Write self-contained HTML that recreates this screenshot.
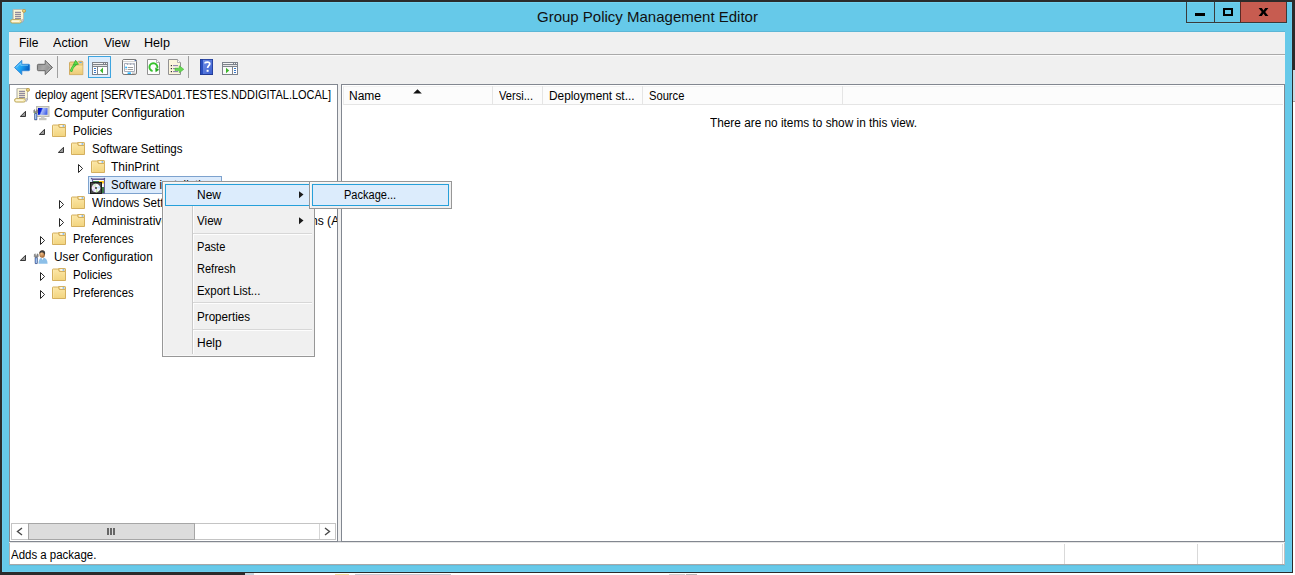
<!DOCTYPE html>
<html><head><meta charset="utf-8">
<style>
*{margin:0;padding:0;box-sizing:border-box}
html,body{width:1295px;height:575px;overflow:hidden;background:#2b2b2b;font-family:"Liberation Sans",sans-serif;font-size:12px;color:#000}
.a{position:absolute}
.t{position:absolute;white-space:pre;line-height:14px;font-size:12px;color:#000}
svg{position:absolute;overflow:visible}
</style></head><body>
<svg width="0" height="0" style="position:absolute">
<defs>
<linearGradient id="fold" x1="0" y1="0" x2="0" y2="1"><stop offset="0" stop-color="#fce7a8"/><stop offset="1" stop-color="#f2d47e"/></linearGradient>
<symbol id="folder" viewBox="0 0 14 13">
<path d="M0.5 1.6 Q0.5 1 1.1 1 L5.8 1 Q6.4 1 6.8 1.8 L7.4 3.4 L13.5 3.4 L13.5 12.5 L0.5 12.5 Z" fill="url(#fold)" stroke="#cfa852" stroke-width="0.9"/>
<path d="M6.5 0.5 L12.9 0.5 Q13.5 0.5 13.5 1.1 L13.5 3.4 L7.4 3.4 Z" fill="#f9e4aa" stroke="#cfa852" stroke-width="0.9"/>
<rect x="8.3" y="1.3" width="3.8" height="1.3" fill="#fff"/><rect x="10.6" y="1.3" width="1.6" height="1.3" fill="#5aa4f0"/>
<rect x="1.05" y="1.6" width="0.6" height="10.4" fill="#fff3c8" opacity="0.6"/>
</symbol>
<symbol id="tri-exp" viewBox="0 0 6 6"><path d="M5.5 0.3 L5.5 5.5 L0.3 5.5 Z" fill="#9a9a9a" stroke="#262626" stroke-width="0.9" stroke-linejoin="miter"/></symbol>
<symbol id="tri-col" viewBox="0 0 5 9"><path d="M0.5 0.5 L4.6 4.5 L0.5 8.5 Z" fill="#fff" stroke="#262626" stroke-width="1"/></symbol>
<symbol id="scroll" viewBox="0 0 16 15">
<path d="M3 0.5 L13.5 0.5 L13.5 12 L3 12 Z" fill="#fdf7d6" stroke="#a9a9a0" stroke-width="1"/>
<path d="M3 0.5 L13.5 0.5 L13.5 12" fill="none" stroke="#bdbdb4" stroke-width="1"/>
<circle cx="14" cy="1.8" r="1.6" fill="#e8cf7a" stroke="#b29646" stroke-width="0.8"/>
<rect x="5" y="2.8" width="6" height="1" fill="#77708f"/><rect x="5" y="4.8" width="6" height="1" fill="#77708f"/>
<rect x="5" y="6.8" width="6" height="1" fill="#77708f"/><rect x="5" y="8.8" width="6" height="1" fill="#77708f"/>
<rect x="0.5" y="10.5" width="11" height="3.6" rx="1.8" fill="#f7eab0" stroke="#b8a45a" stroke-width="0.9"/>
<rect x="2" y="11.6" width="7" height="1.2" fill="#fffbe6"/>
<path d="M11.5 10.5 L13.5 10.8 L12 14" fill="#d9d9e6" stroke="#9999a8" stroke-width="0.6"/>
</symbol>
</defs></svg>

<!-- background strips -->
<div class="a" style="left:1293px;top:70px;width:2px;height:31px;background:#c9dbe4"></div>
<div class="a" style="left:1293px;top:101px;width:2px;height:1px;background:#a0a0a0"></div>
<div class="a" style="left:1293px;top:102px;width:2px;height:473px;background:#fff"></div>
<div class="a" style="left:245px;top:573px;width:9px;height:2px;background:#c8d4dc"></div>
<div class="a" style="left:254px;top:573px;width:1041px;height:2px;background:#fff"></div>

<div class="a" style="left:335px;top:574px;width:14px;height:1px;background:#f3dc9a"></div>
<div class="a" style="left:355px;top:574px;width:96px;height:1px;background:#c8c8d0"></div>
<div class="a" style="left:669px;top:574px;width:16px;height:1px;background:#d0d0d0"></div>
<div class="a" style="left:686px;top:574px;width:11px;height:1px;background:#b8b8b8"></div>
<!-- window frame -->
<div class="a" style="left:2px;top:2px;width:1291px;height:571px;background:#66c9e9;border-right:1px solid #2b2b2b;border-bottom:1px solid #2b2b2b"></div>
<div class="a" style="left:2px;top:2px;width:1290px;height:1px;background:#72d2f0"></div>
<div class="a" style="left:2px;top:2px;width:1px;height:570px;background:#6ecdee"></div>
<div class="a" style="left:2px;top:571px;width:1290px;height:1px;background:#6ecdee"></div>
<div class="a" style="left:1291px;top:2px;width:1px;height:570px;background:#6ecdee"></div>
<div class="a" style="left:1186px;top:23px;width:102px;height:1px;background:#70d0ee"></div>
<div class="a" style="left:9px;top:565px;width:1276px;height:1px;background:#60bedd"></div>
<div class="a" style="left:9px;top:31px;width:1276px;height:1px;background:#5cb6d6"></div>

<!-- title -->
<svg style="left:10px;top:9px" width="16" height="15"><use href="#scroll"/></svg>
<div id="titletext" class="t" style="left:537px;top:8px;font-size:15px;line-height:17px;color:#111">Group Policy Management Editor</div>

<!-- caption buttons -->
<div class="a" style="left:1186px;top:2px;width:29px;height:21px;border:1px solid #3a3a3a;border-top:0"></div>
<div class="a" style="left:1214px;top:2px;width:27px;height:21px;border:1px solid #3a3a3a;border-top:0;border-left:0"></div>
<div class="a" style="left:1240px;top:2px;width:47px;height:21px;background:#c75c50;border:1px solid #3a3a3a;border-top:0;border-left:1px solid #5a2a25"></div>
<div class="a" style="left:1195px;top:13px;width:10px;height:3px;background:#000"></div>
<div class="a" style="left:1223px;top:8px;width:10px;height:8px;border:2px solid #000"></div>
<svg style="left:1258px;top:8px" width="11" height="8" viewBox="0 0 11 8"><path d="M0.6 0 L3.8 0 L5.5 2.4 L7.2 0 L10.4 0 L7.2 4 L10.4 8 L7.2 8 L5.5 5.6 L3.8 8 L0.6 8 L3.8 4 Z" fill="#000"/></svg>

<!-- client area -->
<div class="a" style="left:9px;top:32px;width:1276px;height:533px;background:#f0f0f0"></div>
<!-- menu bar -->
<div class="a" style="left:9px;top:54px;width:1276px;height:1px;background:#a9a9a9"></div>
<div class="a" style="left:9px;top:55px;width:1276px;height:1px;background:#fbfbfb"></div>
<div class="t" style="left:19px;top:36px">File</div>
<div class="t" style="left:53px;top:36px;transform:scaleX(1.05);transform-origin:0 0">Action</div>
<div class="t" style="left:104px;top:36px">View</div>
<div class="t" style="left:144px;top:36px;transform:scaleX(1.05);transform-origin:0 0">Help</div>

<!-- TOOLBAR -->
<!-- back arrow -->
<svg style="left:14px;top:60px" width="17" height="16" viewBox="0 0 17 16">
<defs><linearGradient id="gb" x1="0" y1="0" x2="1" y2="0.4"><stop offset="0" stop-color="#62c8fc"/><stop offset="0.55" stop-color="#1ba2f2"/><stop offset="1" stop-color="#0762c4"/></linearGradient></defs>
<path d="M0.5 7.5 L7.8 0.4 L7.8 4.3 L14.6 4.3 Q15.6 4.3 15.6 5.3 L15.6 9.7 Q15.6 10.7 14.6 10.7 L7.8 10.7 L7.8 14.6 Z" fill="url(#gb)" stroke="#2f86d6" stroke-width="0.9" stroke-linejoin="round"/>
<path d="M2.4 7.2 L6.8 3 L6.8 5.3 L14 5.3" fill="none" stroke="#a8e4ff" stroke-width="0.7" opacity="0.8"/>
</svg>
<!-- forward arrow -->
<svg style="left:37px;top:60px" width="17" height="16" viewBox="0 0 17 16">
<defs><linearGradient id="gg" x1="0" y1="0" x2="1" y2="0.4"><stop offset="0" stop-color="#8a8a8a"/><stop offset="0.5" stop-color="#a8a8a8"/><stop offset="1" stop-color="#8c8c8c"/></linearGradient></defs>
<path d="M15.5 7.5 L8.2 0.4 L8.2 4.3 L1.4 4.3 Q0.4 4.3 0.4 5.3 L0.4 9.7 Q0.4 10.7 1.4 10.7 L8.2 10.7 L8.2 14.6 Z" fill="url(#gg)" stroke="#5c5c5c" stroke-width="0.9" stroke-linejoin="round"/>
<path d="M9.2 2.6 L13.6 7.5 L9.2 12.4" fill="none" stroke="#d8d8d8" stroke-width="0.6" opacity="0.7"/>
</svg>
<div class="a" style="left:57px;top:56px;width:1px;height:22px;background:#a0a0a0"></div>
<!-- folder up -->
<svg style="left:69px;top:60px" width="15" height="16" viewBox="0 0 15 16">
<defs><linearGradient id="gfu" x1="0" y1="0" x2="0" y2="1"><stop offset="0" stop-color="#fbe3a0"/><stop offset="1" stop-color="#eccb78"/></linearGradient></defs>
<path d="M0.5 3 Q0.5 2 1.5 2 L8.5 2 L9.5 1.3 L13 1.3 Q13.8 1.3 13.8 2.2 L13.8 14.6 L0.5 14.6 Z" fill="#f2d486" stroke="#c9a457" stroke-width="0.9"/>
<rect x="10.3" y="2" width="2.4" height="1.1" fill="#5aa8f0"/>
<path d="M0.9 5.2 L13.4 5.2 L13.4 14.2 L0.9 14.2 Z" fill="url(#gfu)"/>
<path d="M0.5 5 L13.8 5" stroke="#d9b666" stroke-width="0.8"/>
<path d="M2.3 10.6 Q3.2 6.6 6.6 4.2" fill="none" stroke="#34a82e" stroke-width="2.6" stroke-linecap="round"/>
<path d="M2.3 10.6 Q3.2 6.6 6.6 4.2" fill="none" stroke="#62e04e" stroke-width="1.5" stroke-linecap="round"/>
<path d="M4.2 4.9 L6.6 0.3 L9.4 4.3 Z" fill="#5cdc48" stroke="#34a82e" stroke-width="0.7" stroke-linejoin="round"/>
</svg>
<!-- checked button -->
<div class="a" style="left:88px;top:56px;width:23px;height:22px;background:#dcecfc;border:1px solid #3ea5e0"></div>
<svg style="left:92px;top:62px" width="16" height="13" viewBox="0 0 16 13" shape-rendering="crispEdges">
<rect x="0" y="0" width="16" height="13" fill="#7e838b"/>
<rect x="1" y="1" width="10" height="1" fill="#f4f4f4"/><rect x="12" y="1" width="1" height="1" fill="#f4f4f4"/><rect x="14" y="1" width="1" height="1" fill="#f4f4f4"/>
<rect x="1" y="3" width="14" height="1" fill="#e6e6e6"/>
<rect x="1" y="5" width="4" height="7" fill="#fff"/><rect x="6" y="5" width="9" height="7" fill="#fff"/>
<rect x="2" y="6" width="2" height="1" fill="#3a78c8"/><rect x="2" y="8" width="2" height="1" fill="#3a78c8"/><rect x="2" y="10" width="2" height="1" fill="#3a78c8"/>
<path d="M8 8.5 L11 5.6 L11 11.4 Z" fill="#3cb62a" shape-rendering="auto"/>
</svg>
<!-- properties -->
<svg style="left:122px;top:59px" width="16" height="16" viewBox="0 0 16 16">
<rect x="0.5" y="0.5" width="14" height="15" rx="1.6" fill="#fbfbfb" stroke="#767676" stroke-width="1"/>
<rect x="1.2" y="1.1" width="11.5" height="1" fill="#fff"/>
<rect x="12.6" y="1" width="1.4" height="1.2" fill="#4a6aa8"/>
<rect x="1" y="2.2" width="13.5" height="0.7" fill="#c4c4c4"/>
<path d="M2.5 4.5 L5 4.5 L5 5.5 L12.5 5.5 L12.5 12.5 L2.5 12.5 Z" fill="#fff" stroke="#a9aebb" stroke-width="1"/>
<rect x="5" y="4" width="7.8" height="2" fill="#a9aebb"/>
<rect x="6" y="4.7" width="2" height="0.9" fill="#fff"/><rect x="9.2" y="4.7" width="2.2" height="0.9" fill="#fff"/>
<circle cx="4.1" cy="8.5" r="0.9" fill="#1eaeff"/>
<rect x="5.6" y="8" width="5.6" height="1" rx="0.5" fill="#9c9c9c"/>
<circle cx="4.1" cy="10.5" r="0.6" fill="#8a8a8a"/>
<rect x="5.6" y="10" width="5.6" height="1" rx="0.5" fill="#9c9c9c"/>
<rect x="5.6" y="13.4" width="3.3" height="1.6" fill="#22b4ff"/>
<rect x="10" y="13.4" width="3.5" height="1.6" fill="#c9c9c9"/>
</svg>
<!-- refresh doc -->
<svg style="left:147px;top:59px" width="14" height="16" viewBox="0 0 14 16">
<path d="M0.5 0.5 L9.5 0.5 L12.5 3.5 L12.5 15.5 L0.5 15.5 Z" fill="#fdfdfd" stroke="#929292" stroke-linejoin="miter"/>
<path d="M9.5 0.5 L9.5 3.5 L12.5 3.5" fill="#fff" stroke="#a0a0a0" stroke-width="0.8"/>
<path d="M5.6 12.1 A4 4 0 1 1 10.3 9.2" fill="none" stroke="#36c22c" stroke-width="1.9"/>
<path d="M8.2 8.6 L12.2 10.8 L8.6 13.2 Z" fill="#22a81e"/>
</svg>
<!-- export list -->
<svg style="left:168px;top:59px" width="17" height="16" viewBox="0 0 17 16">
<path d="M0.5 0.5 L9.5 0.5 L12.5 3.5 L12.5 15.5 L0.5 15.5 Z" fill="#fcf5dc" stroke="#929292" stroke-linejoin="miter"/>
<path d="M9.5 0.5 L9.5 3.5 L12.5 3.5" fill="#fff" stroke="#a0a0a0" stroke-width="0.8"/>
<rect x="2.8" y="6" width="1.2" height="1.2" fill="#333"/><rect x="5" y="6.2" width="5" height="0.9" fill="#7a6fa8"/>
<rect x="2.8" y="9" width="1.2" height="1.2" fill="#333"/><rect x="5" y="9.2" width="5" height="0.9" fill="#7a6fa8"/>
<rect x="2.8" y="12" width="1.2" height="1.2" fill="#333"/><rect x="5" y="12.2" width="5" height="0.9" fill="#7a6fa8"/>
<path d="M7 9.2 L11.3 9.2 L11.3 6.8 L15.8 10.3 L11.3 13.8 L11.3 11.6 L7 11.6 Z" fill="#66d852" stroke="#45b838" stroke-width="0.6"/>
</svg>
<div class="a" style="left:188px;top:56px;width:1px;height:22px;background:#a0a0a0"></div>
<!-- help -->
<svg style="left:200px;top:59px" width="13" height="16" viewBox="0 0 13 16">
<defs><linearGradient id="gh" x1="0" y1="0" x2="1" y2="1"><stop offset="0" stop-color="#6f8fe6"/><stop offset="1" stop-color="#3a5ed0"/></linearGradient></defs>
<rect x="0" y="0" width="13" height="16" fill="#213a94"/>
<rect x="3" y="0.8" width="9.2" height="14.2" fill="url(#gh)"/>
<rect x="0.8" y="0.8" width="2.2" height="14.4" fill="#2a4fc0"/>
<path d="M5 4.6 C5 2.6 9.8 2.4 9.8 4.8 C9.8 6.6 7.6 6.8 7.6 9" fill="none" stroke="#fff" stroke-width="1.7"/>
<rect x="6.6" y="10.8" width="2" height="2" fill="#fff"/>
</svg>
<!-- action pane -->
<svg style="left:222px;top:62px" width="16" height="13" viewBox="0 0 16 13" shape-rendering="crispEdges">
<rect x="0" y="0" width="16" height="13" fill="#7e838b"/>
<rect x="1" y="1" width="10" height="1" fill="#f4f4f4"/><rect x="12" y="1" width="1" height="1" fill="#f4f4f4"/><rect x="14" y="1" width="1" height="1" fill="#f4f4f4"/>
<rect x="1" y="3" width="14" height="1" fill="#e6e6e6"/>
<rect x="1" y="5" width="9" height="7" fill="#fafafa"/><rect x="11" y="5" width="4" height="7" fill="#fff"/>
<rect x="12" y="6" width="2" height="1" fill="#3a78c8"/><rect x="12" y="8" width="2" height="1" fill="#3a78c8"/><rect x="12" y="10" width="2" height="1" fill="#3a78c8"/>
<path d="M4 5.8 L7.2 8.5 L4 11.2 Z" fill="#3cb62a" shape-rendering="auto"/>
</svg>


<!-- tree panel -->
<div class="a" style="left:9px;top:84px;width:329px;height:458px;background:#fff;border:1px solid #828790"></div>
<div class="a" style="left:10px;top:85px;width:327px;height:456px;overflow:hidden" id="tv"><div class="a" style="left:-10px;top:-85px;width:1295px;height:575px">
<svg style="left:14px;top:88px" width="16" height="15"><use href="#scroll"/></svg>
<div class="t" style="left:35px;top:88px;transform:scaleX(0.9144);transform-origin:0 0;">deploy agent [SERVTESAD01.TESTES.NDDIGITAL.LOCAL]</div>
<svg style="left:20px;top:111px" width="6" height="6"><use href="#tri-exp"/></svg>
<svg style="left:33px;top:106px" width="17" height="15" viewBox="0 0 17 15">
<defs><linearGradient id="scr" x1="0" y1="0" x2="1" y2="0.3"><stop offset="0" stop-color="#0000b0"/><stop offset="0.38" stop-color="#0826e0"/><stop offset="0.52" stop-color="#a6b8f8"/><stop offset="0.75" stop-color="#8098f2"/><stop offset="1" stop-color="#4a68ea"/></linearGradient></defs>
<rect x="3.5" y="0.5" width="12.5" height="10" fill="#deded6" stroke="#b9b9b0" stroke-width="1"/>
<rect x="5" y="2" width="9.5" height="6.8" fill="url(#scr)"/>
<rect x="8" y="10.5" width="3.5" height="1.6" fill="#cfcfc8"/>
<rect x="6" y="12" width="7.5" height="2.2" fill="#c6c6bf"/>
<path d="M0.8 4.2 L1.8 3.6 L1.8 5.6 L3.6 5.6 L3.6 3.6 L4.8 4.2 L4.8 6.6 L3.9 7.4 L3.9 14 L1.6 14 L1.6 7.4 L0.8 6.6 Z" fill="#8c8c8c" stroke="#6a6a6a" stroke-width="0.5"/>
<rect x="1.5" y="7.2" width="2.6" height="6.9" rx="1" fill="#3b5db0"/>
<rect x="2.3" y="8" width="1" height="5.2" fill="#cdeeff"/>
<rect x="1" y="6.4" width="0.8" height="0.8" fill="#6ad04a"/>
</svg>

<div class="t" style="left:54px;top:106px;transform:scaleX(1.025);transform-origin:0 0;">Computer Configuration</div>
<svg style="left:39px;top:129px" width="6" height="6"><use href="#tri-exp"/></svg>
<svg style="left:52px;top:124px" width="14" height="13"><use href="#folder"/></svg>
<div class="t" style="left:73px;top:124px;transform:scaleX(0.9502);transform-origin:0 0;">Policies</div>
<svg style="left:58px;top:147px" width="6" height="6"><use href="#tri-exp"/></svg>
<svg style="left:71px;top:142px" width="14" height="13"><use href="#folder"/></svg>
<div class="t" style="left:92px;top:142px;transform:scaleX(0.9622);transform-origin:0 0;">Software Settings</div>
<svg style="left:78px;top:164px" width="5" height="9"><use href="#tri-col"/></svg>
<svg style="left:91px;top:160px" width="14" height="13"><use href="#folder"/></svg>
<div class="t" style="left:111px;top:160px;">ThinPrint</div>
<div class="a" style="left:88px;top:176px;width:134px;height:18px;background:#dcebfc;border:1px solid #7da2ce"></div>
<svg style="left:90px;top:178px" width="16" height="16" viewBox="0 0 16 16">
<rect x="1.5" y="0" width="13" height="1.2" fill="#aaa6c8"/>
<circle cx="1.6" cy="0.6" r="0.8" fill="#5a5290"/><circle cx="14.4" cy="0.6" r="0.8" fill="#5a5290"/>
<rect x="2.6" y="1.4" width="11.8" height="13.8" fill="#fff" stroke="#5a5290" stroke-width="1"/>
<rect x="3" y="3" width="6" height="1.6" fill="#3a7a4a"/>
<rect x="9" y="3" width="5" height="2.5" fill="#f6c21c"/>
<rect x="11.8" y="9" width="2.2" height="6" fill="#3a7a4a"/>
<rect x="0.5" y="4.5" width="11" height="11" fill="#4a4a4a" stroke="#1c1c1c" stroke-width="1"/>
<circle cx="6" cy="10" r="4.3" fill="#f4f4f8"/>
<path d="M6 10 L3 7 A4.3 4.3 0 0 1 6 5.7 Z" fill="#d0f0d0"/>
<path d="M6 10 L9.6 8 A4.3 4.3 0 0 1 10.2 10.5 Z" fill="#bfe0ff"/>
<path d="M6 10 L4 13.8 A4.3 4.3 0 0 1 2 11.5 Z" fill="#dcd0ff"/>
<path d="M6 10 L8 13.8 A4.3 4.3 0 0 1 6 14.3 Z" fill="#c8f0b0"/>
<path d="M6 10 L2 9 A4.3 4.3 0 0 1 2.6 7.4 Z" fill="#f0c8e8"/>
<circle cx="6" cy="10" r="0.9" fill="#222"/>
</svg>

<div class="t" style="left:111px;top:178px;transform:scaleX(0.955);transform-origin:0 0">Software installation</div>
<svg style="left:59px;top:200px" width="5" height="9"><use href="#tri-col"/></svg>
<svg style="left:71px;top:196px" width="14" height="13"><use href="#folder"/></svg>
<div class="t" style="left:92px;top:196px;transform:scaleX(0.974);transform-origin:0 0">Windows Settings</div>
<svg style="left:59px;top:218px" width="5" height="9"><use href="#tri-col"/></svg>
<svg style="left:71px;top:214px" width="14" height="13"><use href="#folder"/></svg>
<div class="t" style="left:92px;top:214px;transform:scaleX(1.011);transform-origin:0 0">Administrative Templates: Policy definitions (ADMX files) retrieved from the local computer.</div>
<svg style="left:40px;top:236px" width="5" height="9"><use href="#tri-col"/></svg>
<svg style="left:52px;top:232px" width="14" height="13"><use href="#folder"/></svg>
<div class="t" style="left:73px;top:232px;transform:scaleX(0.9366);transform-origin:0 0;">Preferences</div>
<svg style="left:20px;top:255px" width="6" height="6"><use href="#tri-exp"/></svg>
<svg style="left:34px;top:250px" width="14" height="14" viewBox="0 0 14 14">
<defs><radialGradient id="face" cx="0.4" cy="0.4" r="0.7"><stop offset="0" stop-color="#f2c08a"/><stop offset="1" stop-color="#9a5a24"/></radialGradient></defs>
<path d="M4.5 13.8 Q4.5 8 8.5 7.5 Q13.6 8 13.6 13.8 Z" fill="#8cbfe8"/>
<path d="M7.5 8 L8.5 10 L9.5 8 Z" fill="#fff"/>
<ellipse cx="8.2" cy="4.2" rx="2.8" ry="3.6" fill="url(#face)"/>
<path d="M5.3 3 Q5.6 0.2 8.4 0.2 Q11 0.3 11.2 3.2 L10.5 5 Q10 2.2 8 2.2 Q6 2.2 5.6 4 Z" fill="#3e3e3e"/>
<path d="M0.3 4.4 L1.3 3.8 L1.3 5.8 L3 5.8 L3 3.8 L4.2 4.4 L4.2 6.8 L3.3 7.6 L3.3 13.6 L1.1 13.6 L1.1 7.6 L0.3 6.8 Z" fill="#8c8c8c" stroke="#6a6a6a" stroke-width="0.5"/>
<rect x="0.9" y="7.4" width="2.6" height="6.4" rx="1" fill="#3b5db0"/>
<rect x="1.7" y="8.2" width="1" height="4.8" fill="#cdeeff"/>
</svg>

<div class="t" style="left:54px;top:250px;transform:scaleX(0.9874);transform-origin:0 0;">User Configuration</div>
<svg style="left:40px;top:272px" width="5" height="9"><use href="#tri-col"/></svg>
<svg style="left:52px;top:268px" width="14" height="13"><use href="#folder"/></svg>
<div class="t" style="left:73px;top:268px;transform:scaleX(0.9502);transform-origin:0 0;">Policies</div>
<svg style="left:40px;top:290px" width="5" height="9"><use href="#tri-col"/></svg>
<svg style="left:52px;top:286px" width="14" height="13"><use href="#folder"/></svg>
<div class="t" style="left:73px;top:286px;transform:scaleX(0.9366);transform-origin:0 0;">Preferences</div>
</div></div>
<!-- list panel -->
<div class="a" style="left:341px;top:84px;width:944px;height:458px;background:#fff;border:1px solid #828790"></div>

<!-- scrollbar -->
<div class="a" style="left:10px;top:523px;width:327px;height:18px;background:#fff"></div>
<div class="a" style="left:11px;top:523px;width:325px;height:17px;border:1px solid #c4c4c4"></div>
<div class="a" style="left:28px;top:523px;width:167px;height:17px;background:#dcdcdc;border:1px solid #a6a6a6"></div>
<div class="a" style="left:319px;top:524px;width:1px;height:15px;background:#d6d6d6"></div>
<div class="a" style="left:107px;top:528px;width:2px;height:7px;background:#666"></div>
<div class="a" style="left:110px;top:528px;width:2px;height:7px;background:#666"></div>
<div class="a" style="left:113px;top:528px;width:2px;height:7px;background:#666"></div>
<svg style="left:16px;top:527px" width="7" height="9" viewBox="0 0 7 9"><path d="M6 1 L1.5 4.5 L6 8" fill="none" stroke="#4a4a4a" stroke-width="1.4"/></svg>
<svg style="left:324px;top:527px" width="7" height="9" viewBox="0 0 7 9"><path d="M1 1 L5.5 4.5 L1 8" fill="none" stroke="#4a4a4a" stroke-width="1.4"/></svg>
<!-- list header -->
<div class="a" style="left:342px;top:85px;width:942px;height:20px;background:#fff"></div>
<div class="a" style="left:343px;top:86px;width:940px;height:19px;background:#fcfcfc;border-bottom:1px solid #e5e5e5;border-left:1px solid #ececec;border-top:1px solid #f2f2f2"></div>
<div class="a" style="left:492px;top:86px;width:1px;height:18px;background:#e5e5e5"></div>
<div class="a" style="left:542px;top:86px;width:1px;height:18px;background:#e5e5e5"></div>
<div class="a" style="left:642px;top:86px;width:1px;height:18px;background:#e5e5e5"></div>
<div class="a" style="left:842px;top:86px;width:1px;height:18px;background:#e5e5e5"></div>
<svg style="left:413px;top:89px" width="9" height="5" viewBox="0 0 9 5"><path d="M0.2 4.6 L4.5 0.2 L8.8 4.6 Z" fill="#111"/></svg>
<div class="t" style="left:349px;top:89px">Name</div>
<div class="t" style="left:499px;top:89px;transform:scaleX(0.927);transform-origin:0 0">Versi...</div>
<div class="t" style="left:549px;top:89px;transform:scaleX(0.986);transform-origin:0 0">Deployment st...</div>
<div class="t" style="left:649px;top:89px;transform:scaleX(0.93);transform-origin:0 0">Source</div>
<div class="t" style="left:710px;top:116px;transform:scaleX(0.985);transform-origin:0 0">There are no items to show in this view.</div>

<!-- context menu -->
<div class="a" style="left:162px;top:181px;width:153px;height:176px;background:#f0f0f0;border:1px solid #979797"></div>
<div class="a" style="left:163px;top:182px;width:151px;height:174px;border:1px solid #f8f8f8;border-right:0"></div>
<div class="a" style="left:192px;top:206px;width:1px;height:148px;background:#cacaca"></div>
<div class="a" style="left:193px;top:206px;width:1px;height:148px;background:#fdfdfd"></div>
<div class="a" style="left:165px;top:184px;width:147px;height:22px;background:#dcecfc;border:1px solid #26a0da"></div>
<div class="a" style="left:193px;top:233px;width:119px;height:1px;background:#d7d7d7"></div>
<div class="a" style="left:193px;top:234px;width:119px;height:1px;background:#fdfdfd"></div>
<div class="a" style="left:193px;top:302px;width:119px;height:1px;background:#d7d7d7"></div>
<div class="a" style="left:193px;top:303px;width:119px;height:1px;background:#fdfdfd"></div>
<div class="a" style="left:193px;top:329px;width:119px;height:1px;background:#d7d7d7"></div>
<div class="a" style="left:193px;top:330px;width:119px;height:1px;background:#fdfdfd"></div>
<svg style="left:299px;top:191px" width="5" height="8" viewBox="0 0 5 8"><path d="M0 0.2 L4.5 3.6 L0 7.2 Z" fill="#1a1a1a"/></svg>
<svg style="left:299px;top:217px" width="5" height="8" viewBox="0 0 5 8"><path d="M0 0.2 L4.5 3.6 L0 7.2 Z" fill="#1a1a1a"/></svg>
<div class="t" style="left:197px;top:188px">New</div>
<div class="t" style="left:197px;top:214px;transform:scaleX(0.97);transform-origin:0 0">View</div>
<div class="t" style="left:197px;top:240px;transform:scaleX(0.922);transform-origin:0 0">Paste</div>
<div class="t" style="left:197px;top:262px;transform:scaleX(0.918);transform-origin:0 0">Refresh</div>
<div class="t" style="left:197px;top:284px;transform:scaleX(0.95);transform-origin:0 0">Export List...</div>
<div class="t" style="left:197px;top:310px;transform:scaleX(0.97);transform-origin:0 0">Properties</div>
<div class="t" style="left:197px;top:336px">Help</div>
<!-- submenu -->
<div class="a" style="left:309px;top:181px;width:143px;height:28px;background:#f0f0f0;border:1px solid #979797"></div>
<div class="a" style="left:310px;top:182px;width:141px;height:26px;border:1px solid #f8f8f8;border-right:0;border-bottom:0"></div>
<div class="a" style="left:312px;top:184px;width:137px;height:22px;background:#dcecfc;border:1px solid #26a0da"></div>
<div class="t" style="left:344px;top:188px;transform:scaleX(0.92);transform-origin:0 0">Package...</div>

<!-- status bar -->
<div class="a" style="left:9px;top:542px;width:1276px;height:23px;background:#fff;border-bottom:1px solid #a8a8a8;border-left:1px solid #b0b0b0;border-right:1px solid #c0c0c0"></div>
<div class="a" style="left:338px;top:541px;width:3px;height:1px;background:#9a9ea6"></div>
<div class="a" style="left:9px;top:542px;width:1276px;height:1px;background:#e4e4e4"></div>
<div class="t" style="left:11px;top:548px;transform:scaleX(0.955);transform-origin:0 0">Adds a package.</div>
<div class="a" style="left:1064px;top:544px;width:1px;height:20px;background:#d9d9d9"></div>
<div class="a" style="left:1197px;top:544px;width:1px;height:20px;background:#d9d9d9"></div>
<div class="a" style="left:1282px;top:544px;width:1px;height:20px;background:#d9d9d9"></div>


</body></html>
